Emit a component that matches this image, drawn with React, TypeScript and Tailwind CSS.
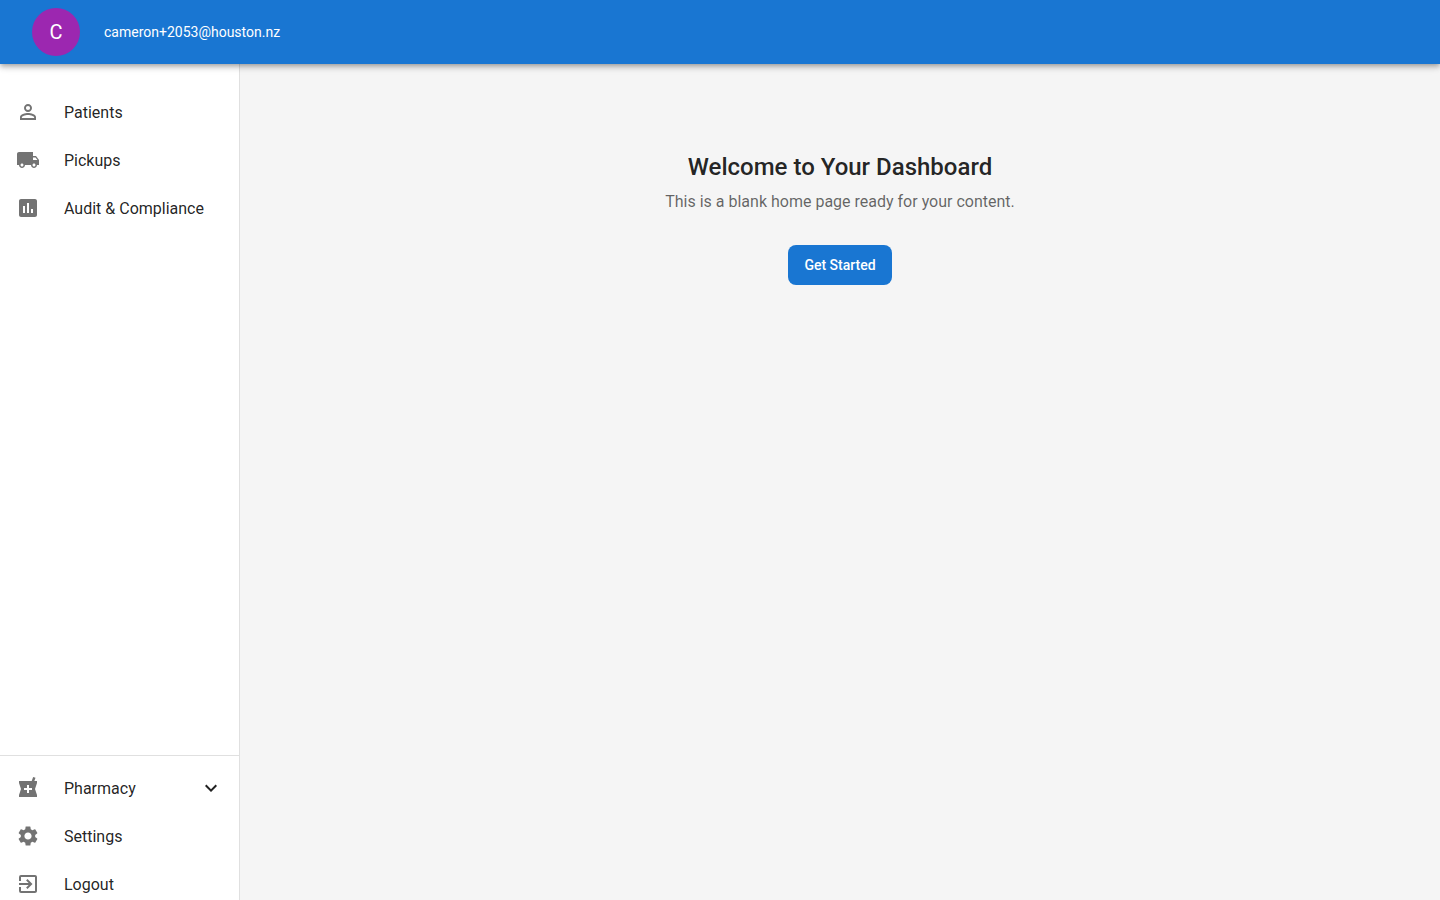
import { useState } from "react";
import {
    MdPersonOutline,
    MdLocalShipping,
    MdAssessment,
    MdLocalPharmacy,
    MdSettings,
    MdExitToApp,
    MdExpandMore,
} from "react-icons/md";

const mainLinks = [
    { label: "Patients", href: "#patients", Icon: MdPersonOutline },
    { label: "Pickups", href: "#pickups", Icon: MdLocalShipping },
    { label: "Audit & Compliance", href: "#audit", Icon: MdAssessment },
];

const itemStyle = "flex h-12 w-full items-center px-4 text-left hover:bg-black/5";
const iconStyle = "mr-6 h-6 w-6 shrink-0 text-black/55";
const labelStyle = "flex-1 pt-0.5";

const TopBar = ({ email }: { email: string }) => {
    return (
        <header className="relative z-10 flex h-16 shrink-0 items-center gap-6 bg-[#1976d2] px-8 text-white shadow-[0_2px_4px_-1px_rgba(0,0,0,0.2),0_4px_5px_0_rgba(0,0,0,0.14),0_1px_10px_0_rgba(0,0,0,0.12)]">
            <div className="flex h-12 w-12 items-center justify-center rounded-full bg-[#9c27b0] text-xl">
                {email[0].toUpperCase()}
            </div>
            <span className="text-sm">{email}</span>
        </header>
    );
};

const SideBar = () => {
    const [open, setOpen] = useState(false);

    return (
        <nav className="flex w-60 shrink-0 flex-col justify-between border-r border-black/12 bg-white">
            <ul className="pt-6">
                {mainLinks.map(({ label, href, Icon }) => (
                    <li key={label}>
                        <a href={href} className={itemStyle}>
                            <Icon className={iconStyle} />
                            <span className={labelStyle}>{label}</span>
                        </a>
                    </li>
                ))}
            </ul>
            <ul className="-mb-2 border-t border-black/12 pt-2">
                <li>
                    <button type="button" aria-expanded={open} className={itemStyle} onClick={() => setOpen(!open)}>
                        <MdLocalPharmacy className={iconStyle} />
                        <span className={labelStyle}>Pharmacy</span>
                        <MdExpandMore className={open ? "h-6 w-6 rotate-180" : "h-6 w-6"} />
                    </button>
                </li>
                <li>
                    <a href="#settings" className={itemStyle}>
                        <MdSettings className={iconStyle} />
                        <span className={labelStyle}>Settings</span>
                    </a>
                </li>
                <li>
                    <button type="button" className={itemStyle}>
                        <MdExitToApp className={iconStyle} />
                        <span className={labelStyle}>Logout</span>
                    </button>
                </li>
            </ul>
        </nav>
    );
};

const App = () => {
    return (
        <div className="flex h-screen flex-col overflow-hidden bg-[#f5f5f5] font-[Roboto,sans-serif] text-base text-black/87">
            <TopBar email="cameron+2053@houston.nz" />
            <div className="flex min-h-0 flex-1">
                <SideBar />
                <main className="flex flex-1 flex-col items-center pt-[87px] text-center">
                    <h1 className="text-2xl font-medium">Welcome to Your Dashboard</h1>
                    <p className="mt-[7px] text-black/60">This is a blank home page ready for your content.</p>
                    <button type="button" className="mt-[31px] h-10 rounded-lg bg-[#1976d2] px-4 text-sm font-medium text-white hover:bg-[#1565c0]">
                        Get Started
                    </button>
                </main>
            </div>
        </div>
    );
};

export default App;
